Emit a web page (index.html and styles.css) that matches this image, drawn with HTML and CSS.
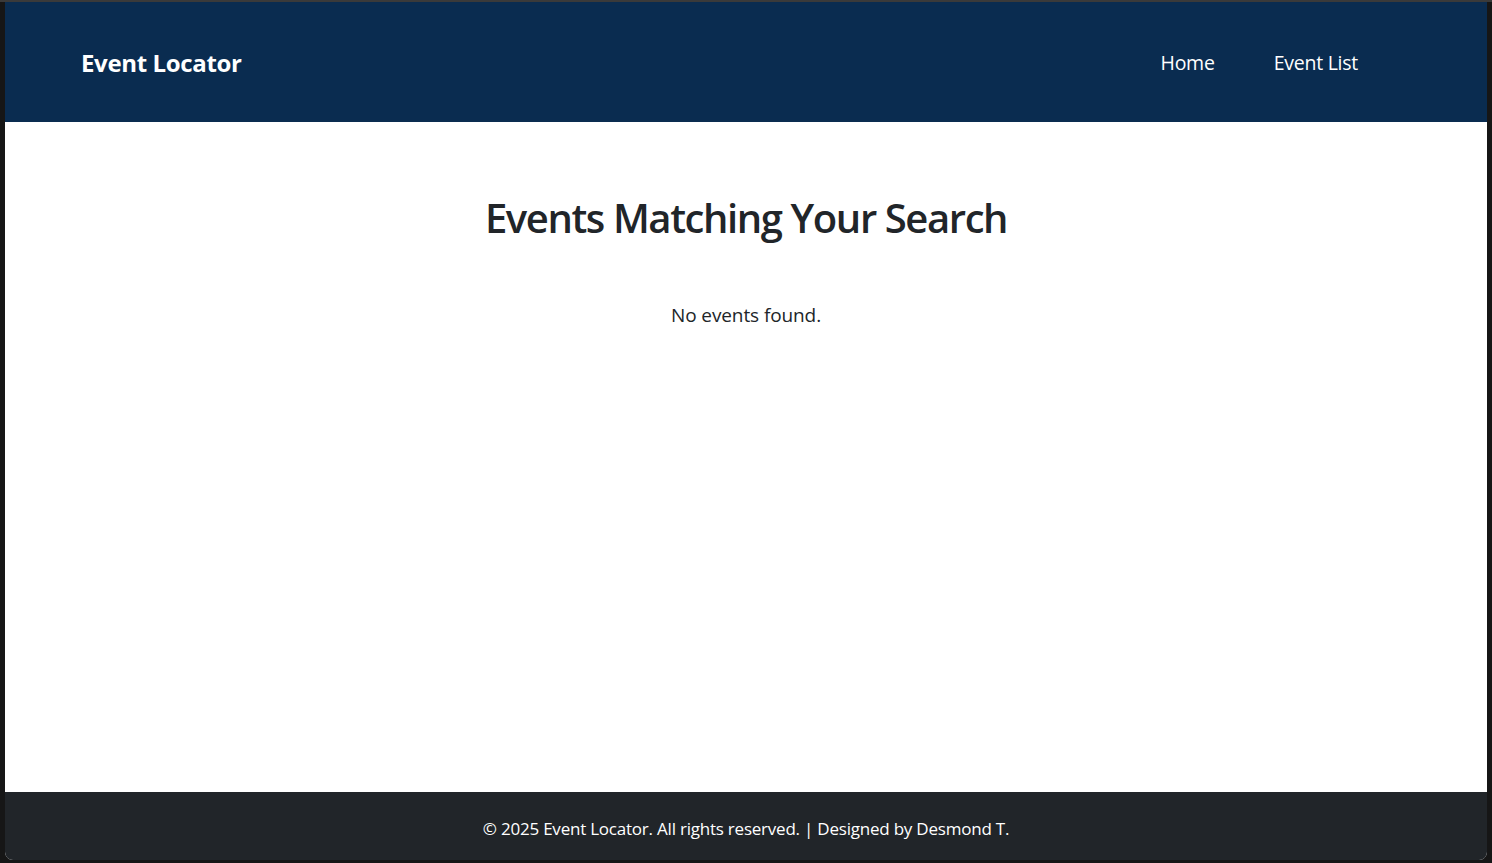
FILE: index.html
```html
<!DOCTYPE html>
<html lang="en">
<head>
<meta charset="utf-8">
<title>Event Locator</title>
<link rel="stylesheet" href="styles.css">
</head>
<body>
<div class="window">
  <header class="navbar">
    <a class="brand" href="#">Event Locator</a>
    <nav class="nav">
      <a class="nav-link" href="#">Home</a>
      <a class="nav-link" href="#">Event List</a>
    </nav>
  </header>
  <main class="content">
    <h1 class="title">Events Matching Your Search</h1>
    <p class="empty">No events found.</p>
  </main>
  <footer class="footer">
    <p class="footer-text">© 2025 Event Locator. All rights reserved. | Designed by Desmond T.</p>
  </footer>
</div>
</body>
</html>
```
FILE: styles.css
```css
html, body {
  margin: 0;
  padding: 0;
  height: 100%;
}
body {
  background: #161616;
  border-top: 2px solid #3a3a3a;
  box-sizing: border-box;
  font-family: "Open Sans", "Noto Sans", sans-serif;
  overflow: hidden;
}
.window {
  margin: 0 5px 0 5px;
  height: 858px;
  display: flex;
  flex-direction: column;
  background: #ffffff;
  border-radius: 0 0 8px 8px;
  overflow: hidden;
}
.navbar {
  height: 120px;
  flex: none;
  background: #0a2c50;
  display: flex;
  align-items: center;
  justify-content: space-between;
  padding: 0 129px 0 76px;
}
.brand {
  color: #ffffff;
  text-decoration: none;
  font-weight: 700;
  font-size: 24px;
  letter-spacing: -0.35px;
}
.nav {
  display: flex;
  gap: 59px;
}
.nav-link {
  color: #ffffff;
  text-decoration: none;
  font-size: 19.5px;
  letter-spacing: -0.25px;
}
.content {
  flex: 1;
  text-align: center;
  padding-top: 72px;
  color: #212529;
}
.title {
  margin: 0;
  font-size: 40px;
  line-height: 48px;
  font-weight: 600;
  letter-spacing: -1.4px;
}
.empty {
  margin: 59px 0 0;
  font-size: 19px;
  line-height: 28px;
  letter-spacing: -0.1px;
}
.footer {
  height: 68px;
  flex: none;
  background: #212529;
  display: flex;
  align-items: center;
  justify-content: center;
}
.footer-text {
  margin: 4px 0 0;
  color: #ffffff;
  font-size: 17px;
  letter-spacing: -0.22px;
}
```
